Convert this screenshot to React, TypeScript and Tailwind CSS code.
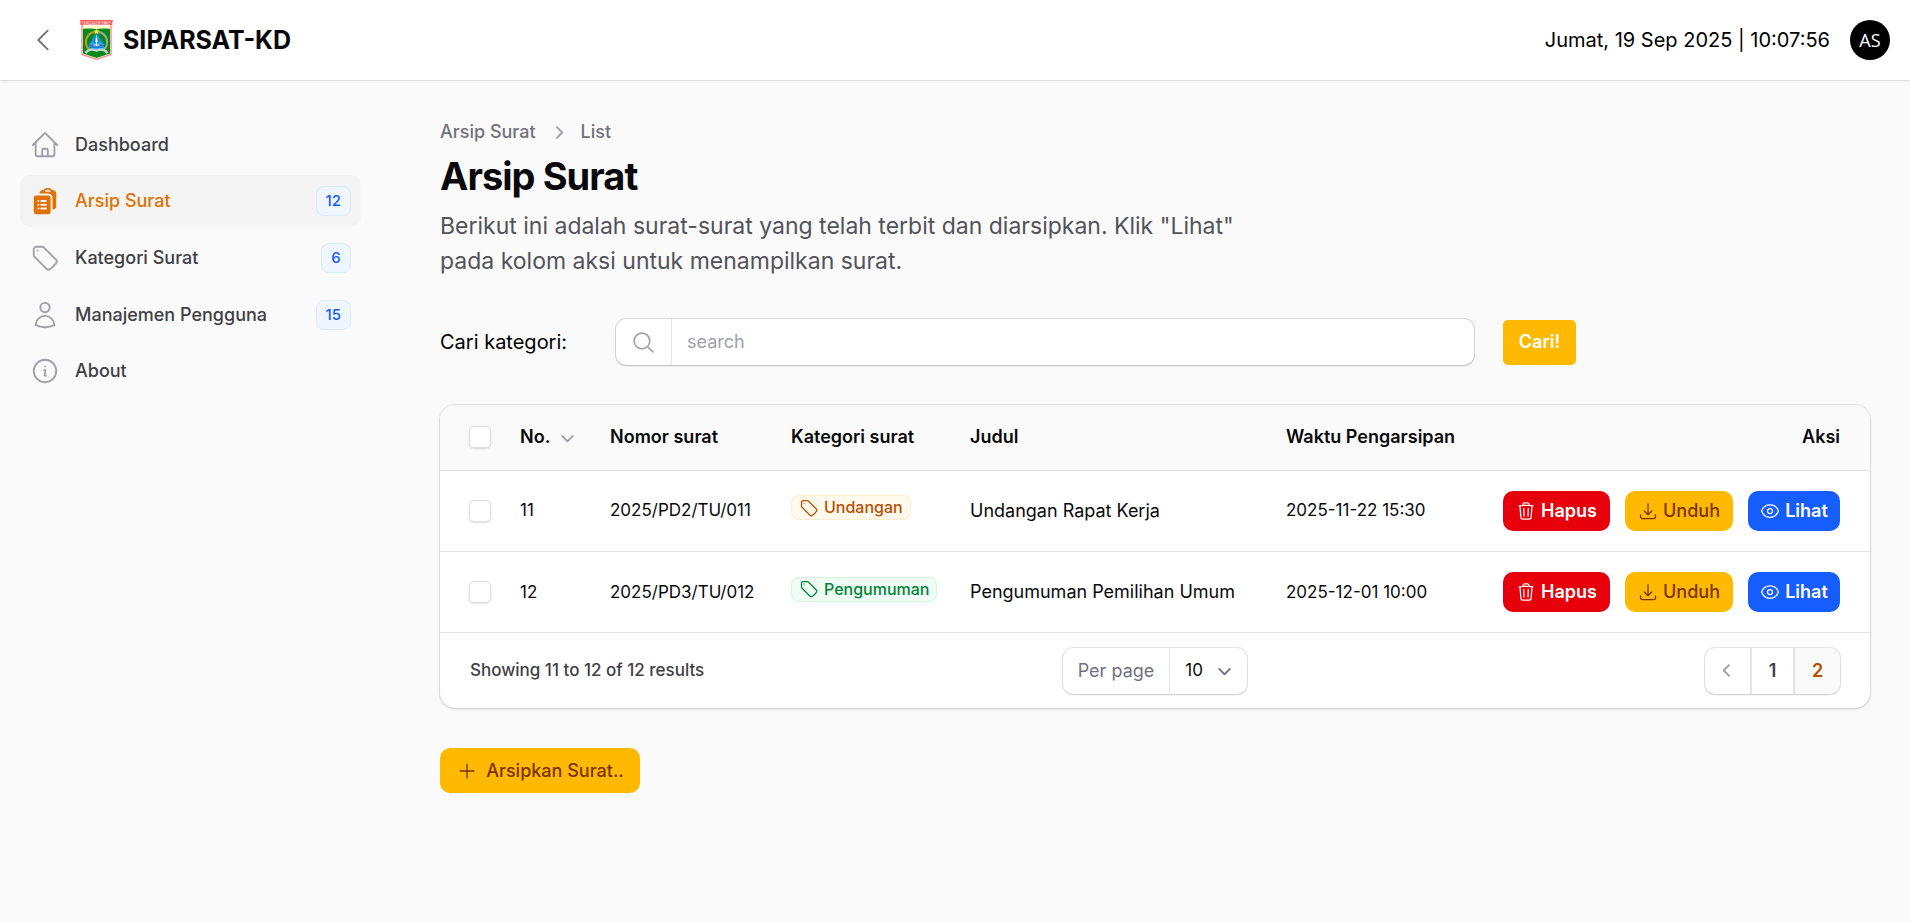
import type { ReactNode } from "react";
import {
  HiOutlineHome,
  HiClipboardDocumentList,
  HiOutlineTag,
  HiOutlineUser,
  HiOutlineInformationCircle,
  HiOutlineTrash,
  HiOutlineArrowDownTray,
  HiOutlineEye,
  HiOutlineChevronLeft,
  HiOutlineMagnifyingGlass,
  HiOutlinePlus,
  HiMiniChevronRight,
  HiMiniChevronDown,
  HiMiniChevronLeft,
} from "react-icons/hi2";

const navItems: { label: string; icon: ReactNode; count?: number; active?: boolean }[] = [
  { label: "Dashboard", icon: <HiOutlineHome /> },
  { label: "Arsip Surat", icon: <HiClipboardDocumentList />, count: 12, active: true },
  { label: "Kategori Surat", icon: <HiOutlineTag />, count: 6 },
  { label: "Manajemen Pengguna", icon: <HiOutlineUser />, count: 15 },
  { label: "About", icon: <HiOutlineInformationCircle /> },
];

const letters = [
  {
    no: 11,
    nomor: "2025/PD2/TU/011",
    kategori: "Undangan",
    tone: "border-[#feeccd] bg-[#fffaeb] text-[#bb4d00]",
    judul: "Undangan Rapat Kerja",
    waktu: "2025-11-22 15:30",
  },
  {
    no: 12,
    nomor: "2025/PD3/TU/012",
    kategori: "Pengumuman",
    tone: "border-[#d3f5de] bg-[#f0fdf4] text-[#008236]",
    judul: "Pengumuman Pemilihan Umum",
    waktu: "2025-12-01 10:00",
  },
];

function Crest() {
  return (
    <svg viewBox="0 0 33 40" className="h-10 w-[33px]" aria-hidden="true">
      <path d="M2 1 H31 V34.5 L16.5 39.3 L2 34.5 Z" fill="#fff" stroke="#ff8a8a" strokeWidth="1.4" />
      <path d="M0 .7 H33" stroke="#ff5c5c" strokeWidth="1.4" />
      <text x="16.5" y="5.3" textAnchor="middle" fontSize="3" fontWeight="700" fill="#e81818">
        KABUPATEN MALANG
      </text>
      <path d="M3 8.5 H30 V33.6 L16.5 38 L3 33.6 Z" fill="#008a16" />
      <path d="M3 6.6 Q16.5 6 30 6.6 V8.6 Q23 7.2 16.5 9 Q10 7.2 3 8.6Z" fill="#fffbb0" />
      <path d="M9.6 30 A10.4 10.4 0 0 1 14.5 11.8" fill="none" stroke="#b39a3c" strokeWidth="2.2" />
      <path d="M23.4 30 A10.4 10.4 0 0 0 18.5 11.8" fill="none" stroke="#9aa3a0" strokeWidth="2.2" />
      <path d="M16.5 13 L20.4 18.5 L24.4 26 L22 30 H11 L8.6 26 L12.6 18.5 Z" fill="#1d8fe0" />
      <path d="M16.5 14 L18 22 H15 Z" fill="#9fdcff" />
      <path d="M8.6 24 L13 22.5 L16.5 23.5 L20 22.5 L24.4 24 L23 29 H10 Z" fill="#38a8f2" />
      <path d="M9 25.2 H24 M10 27.2 H23" stroke="#0b4fa8" strokeWidth=".8" />
      <path d="M16.5 18 V26 M13.5 25 H19.5" stroke="#fff" strokeWidth=".9" />
      <path d="M5.5 33 Q9 27.8 16.5 30.6 Q24 27.8 27.5 33" fill="none" stroke="#c9d3d6" strokeWidth="2.4" />
      <path d="M16.5 8.2 L17.4 10.4 L19.7 10.5 L17.9 12 L18.5 14.2 L16.5 13 L14.5 14.2 L15.1 12 L13.3 10.5 L15.6 10.4Z" fill="#ffee30" />
    </svg>
  );
}

function Header() {
  return (
    <header className="relative flex h-20 items-center justify-between bg-white px-5 shadow-[0_0_0_1px_rgba(9,9,11,0.05),0_1px_3px_rgba(0,0,0,0.1)]">
      <div className="flex items-center">
        <button type="button" aria-label="Tutup menu" className="flex size-[45px] items-center justify-center text-[#71717b]">
          <HiOutlineChevronLeft className="size-[30px]" />
        </button>
        <a href="#" className="ml-[15px] flex items-center gap-[10px] text-[25px] leading-8 font-bold text-[#09090b]">
          <Crest />
          SIPARSAT-KD
        </a>
      </div>
      <div className="flex items-center gap-5 text-xl text-black">
        <time dateTime="2025-09-19T10:07:56">Jumat, 19 Sep 2025 | 10:07:56</time>
        <button type="button" className="size-10 rounded-full bg-black font-['Open_Sans',sans-serif] text-lg text-white">
          AS
        </button>
      </div>
    </header>
  );
}

function navClass(item: { active?: boolean; count?: number }) {
  if (item.active) return "flex h-[52px] items-center gap-[15px] rounded-[10px] bg-[#f4f4f5] px-[10px] text-[#e17100]";
  if (item.count !== undefined) return "flex h-[52px] items-center gap-[15px] rounded-[10px] px-[10px] text-[#3f3f46]";
  return "flex h-[50px] items-center gap-[15px] rounded-[10px] px-[10px] text-[#3f3f46]";
}

function Sidebar() {
  return (
    <nav className="w-[341px] shrink-0 pt-10">
      <ul className="flex flex-col gap-[5px]">
        {navItems.map((item) => (
          <li key={item.label}>
            <a href="#" className={navClass(item)}>
              <span className={item.active ? "text-[30px]" : "text-[30px] text-[#9f9fa9]"}>{item.icon}</span>
              <span className="flex-1 text-lg leading-6 font-medium">{item.label}</span>
              {item.count !== undefined && (
                <span className="min-w-[30px] rounded-lg border border-[#dbeafe] bg-[#eff6ff] px-[9px] py-1 text-center text-[15px] leading-5 font-medium text-[#155dfc]">
                  {item.count}
                </span>
              )}
            </a>
          </li>
        ))}
      </ul>
    </nav>
  );
}

function Tick({ label }: { label: string }) {
  return (
    <input
      type="checkbox"
      aria-label={label}
      className="block size-[22px] appearance-none rounded-[5px] border border-[#dedee0] bg-white shadow-[0_1px_2px_rgba(0,0,0,0.12)] checked:bg-amber-500"
    />
  );
}

function LettersTable() {
  return (
    <table className="w-full table-fixed text-left text-lg text-[#09090b]">
      <thead className="bg-[#fafafa]">
        <tr className="h-[65px]">
          <th className="w-[65px] pl-[29px]"><Tick label="Pilih semua" /></th>
          <th className="w-[90px] px-[15px] font-semibold">
            <button type="button" className="flex items-center gap-[5px] font-semibold">
              No. <HiMiniChevronDown className="size-[25px] shrink-0 text-[#9f9fa9]" />
            </button>
          </th>
          <th className="w-[181px] px-[15px] font-semibold">Nomor surat</th>
          <th className="w-[179px] px-[15px] font-semibold whitespace-nowrap">Kategori surat</th>
          <th className="w-[316px] px-[15px] font-semibold">Judul</th>
          <th className="w-[206px] px-[15px] font-semibold whitespace-nowrap">Waktu Pengarsipan</th>
          <th className="pr-[30px] text-right font-semibold">Aksi</th>
        </tr>
      </thead>
      <tbody>
        {letters.map((row) => (
          <tr key={row.no} className="h-[81px] border-t border-[#e4e4e7]">
            <td className="pl-[29px]"><Tick label={`Pilih surat ${row.no}`} /></td>
            <td className="px-[15px] text-[17px]">{row.no}</td>
            <td className="px-[15px] text-[17px] whitespace-nowrap">{row.nomor}</td>
            <td className="px-[15px]">
              <span className={`inline-flex items-center gap-[5px] rounded-lg border px-[7px] text-base leading-[23px] font-medium ${row.tone}`}>
                <HiOutlineTag className="size-5" />
                {row.kategori}
              </span>
            </td>
            <td className="px-[15px] whitespace-nowrap">{row.judul}</td>
            <td className="px-[15px] text-[17px] whitespace-nowrap">{row.waktu}</td>
            <td className="pr-[30px]">
              <div className="flex justify-end gap-[15px] font-semibold">
                <button type="button" className="flex h-10 w-[107px] items-center justify-center gap-[5px] rounded-[10px] bg-[#e7000b] text-white">
                  <HiOutlineTrash className="size-5" />
                  Hapus
                </button>
                <button type="button" className="flex h-10 w-[108px] items-center justify-center gap-[5px] rounded-[10px] bg-[#ffb900] font-medium text-[#7b3306]">
                  <HiOutlineArrowDownTray className="size-5" />
                  Unduh
                </button>
                <button type="button" className="flex h-10 w-[92px] items-center justify-center gap-[5px] rounded-[10px] bg-[#155dfc] text-white">
                  <HiOutlineEye className="size-5" />
                  Lihat
                </button>
              </div>
            </td>
          </tr>
        ))}
      </tbody>
    </table>
  );
}

function TableFooter() {
  return (
    <div className="grid h-[76px] grid-cols-[1fr_auto_1fr] items-center border-t border-[#e4e4e7] px-[30px] text-lg">
      <span className="text-[17px] font-medium text-[#3f3f46]">Showing 11 to 12 of 12 results</span>
      <div className="flex h-[46px] rounded-[10px] bg-white shadow-[0_0_0_1px_rgba(9,9,11,0.1),0_1px_2px_rgba(0,0,0,0.12)]">
        <label htmlFor="per-page" className="flex items-center border-r border-[#e4e4e7] px-[15px] text-[#71717b]">
          Per page
        </label>
        <div className="relative flex items-center">
          <select id="per-page" defaultValue="10" className="h-full w-[77px] appearance-none bg-transparent pl-[15px] text-[17px] text-[#09090b]">
            <option>5</option>
            <option>10</option>
            <option>25</option>
          </select>
          <HiMiniChevronDown className="pointer-events-none absolute right-[10px] size-[25px] text-[#71717b]" />
        </div>
      </div>
      <nav aria-label="Halaman" className="flex h-[46px] divide-x-2 divide-[#e4e4e7] justify-self-end overflow-hidden rounded-[10px] bg-white font-semibold shadow-[0_0_0_1px_rgba(9,9,11,0.1),0_1px_2px_rgba(0,0,0,0.12)]">
        <button type="button" aria-label="Sebelumnya" className="flex w-[47px] items-center justify-center text-[#9f9fa9]">
          <HiMiniChevronLeft className="size-[25px]" />
        </button>
        <button type="button" className="w-[43px] text-[#3f3f46]">1</button>
        <button type="button" aria-current="page" className="w-[45px] bg-[#fafafa] text-[#bb4d00]">2</button>
      </nav>
    </div>
  );
}

export default function App() {
  return (
    <div className="min-h-screen bg-[#fafafa] font-['Inter',sans-serif]">
      <Header />
      <div className="flex gap-[79px] pr-10 pl-5">
        <Sidebar />
        <main className="min-w-0 flex-1 pt-10">
          <ol className="flex h-6 items-center gap-[10px] text-lg leading-6 font-medium text-[#71717b]">
            <li><a href="#">Arsip Surat</a></li>
            <li className="flex items-center gap-[10px]">
              <HiMiniChevronRight className="size-[25px] text-[#9f9fa9]" />
              List
            </li>
          </ol>
          <h1 className="mt-[10px] text-[38px] leading-[45px] font-bold tracking-tight text-[#09090b]">Arsip Surat</h1>
          <p className="mt-[10px] max-w-[840px] text-[23px] leading-[35px] text-[#52525b]">
            Berikut ini adalah surat-surat yang telah terbit dan diarsipkan. Klik "Lihat" pada kolom aksi untuk menampilkan surat.
          </p>
          <form className="mt-10 flex items-center" onSubmit={(e) => e.preventDefault()}>
            <label htmlFor="cari" className="w-[176px] text-xl text-black">Cari kategori:</label>
            <div className="flex h-[46px] w-[858px] items-center rounded-[10px] bg-white shadow-[0_0_0_1px_rgba(9,9,11,0.12),0_1px_2px_rgba(0,0,0,0.15)]">
              <span className="flex h-full w-14 items-center justify-center border-r border-[#e4e4e7] text-[#9f9fa9]">
                <HiOutlineMagnifyingGlass className="size-[25px]" />
              </span>
              <input id="cari" type="search" placeholder="search" className="min-w-0 flex-1 bg-transparent px-[15px] text-lg outline-none placeholder:text-[#9f9fa9]" />
            </div>
            <button type="submit" className="ml-[29px] h-[45px] w-[73px] rounded-[5px] bg-[#ffb900] text-lg font-semibold text-white">
              Cari!
            </button>
          </form>
          <section className="mt-10 overflow-hidden rounded-[15px] bg-white shadow-[0_0_0_1px_rgba(9,9,11,0.08),0_1px_3px_rgba(0,0,0,0.15)]">
            <LettersTable />
            <TableFooter />
          </section>
          <button type="button" className="mt-10 flex h-[45px] w-[200px] items-center justify-center gap-2 rounded-[10px] bg-[#ffb900] text-lg font-medium text-[#7b3306]">
            <HiOutlinePlus className="size-[22px]" />
            Arsipkan Surat..
          </button>
        </main>
      </div>
    </div>
  );
}
